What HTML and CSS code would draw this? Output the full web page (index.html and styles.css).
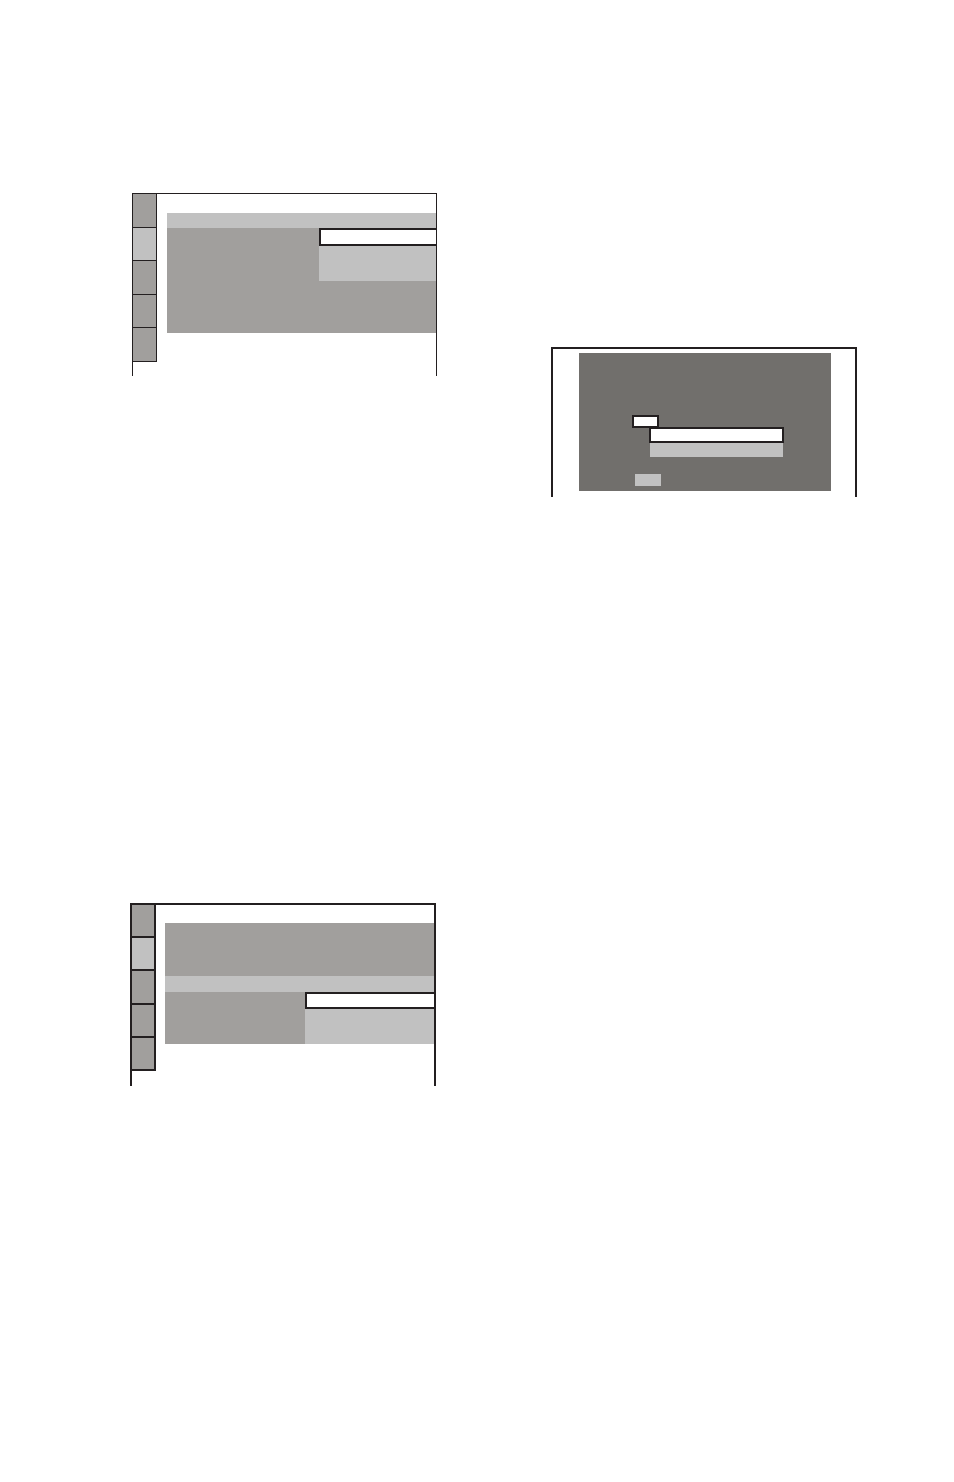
FILE: index.html
```html
<!DOCTYPE html>
<html lang="en">
<head>
  <meta charset="UTF-8" />
  <title>Setup display</title>
  <meta name="viewport" content="width=device-width, initial-scale=1.0" />
  <link rel="stylesheet" href="styles.css">
</head>
<body>
  <div class="page">
    <div class="col-left">
      <!-- setup menu, first screen -->
      <div class="screen screen-a">
        <div class="tabs">
          <div class="tab"></div>
          <div class="tab active"></div>
          <div class="tab"></div>
          <div class="tab"></div>
          <div class="tab"></div>
        </div>
        <div class="panel panel-a">
          <div class="bar-head"></div>
          <div class="menu-body">
            <div class="menu-left"></div>
            <div class="menu-right">
              <div class="option selected"></div>
              <div class="option-list"></div>
            </div>
          </div>
        </div>
      </div>

      <!-- setup menu, second screen -->
      <div class="screen screen-c">
        <div class="tabs">
          <div class="tab"></div>
          <div class="tab active"></div>
          <div class="tab"></div>
          <div class="tab"></div>
          <div class="tab"></div>
        </div>
        <div class="panel panel-c">
          <div class="info-block"></div>
          <div class="bar-sub"></div>
          <div class="menu-body short">
            <div class="menu-left"></div>
            <div class="menu-right">
              <div class="option selected"></div>
              <div class="option-list"></div>
            </div>
          </div>
        </div>
      </div>
    </div>

    <div class="col-right">
      <!-- dialog screen -->
      <div class="screen screen-b">
        <div class="dialog">
          <div class="chip"></div>
          <div class="field"></div>
          <div class="field-list"></div>
          <div class="button"></div>
        </div>
      </div>
    </div>
  </div>
</body>
</html>
```

FILE: styles.css
```css
body {
  margin: 0;
  padding: 0;
  background: #ffffff;
  font-family: 'Liberation Sans', Arial, sans-serif;
}
.page {
  display: flex;
  align-items: flex-start;
  gap: 114px;
  padding-left: 132px;
  min-height: 1482px;
  box-sizing: border-box;
}
.col-left {
  display: flex;
  flex-direction: column;
}
.col-right {
  padding-top: 347px;
}

/* screen frame: open at the bottom */
.screen {
  box-sizing: border-box;
  border: 1px solid #231f20;
  border-bottom: none;
  display: flex;
  align-items: flex-start;
  background: #fff;
}
.screen-a {
  width: 305px;
  height: 183px;
  margin-top: 193px;
}
.screen-c {
  width: 306px;
  height: 183px;
  margin-top: 527px;
  margin-left: -2px;
  border-width: 2px;
}
.screen-b {
  width: 306px;
  height: 150px;
  border-width: 2px;
}

/* tab column on the left */
.tabs {
  display: flex;
  flex-direction: column;
  width: 23px;
  height: 168px;
  border-right: 1px solid #231f20;
  flex-shrink: 0;
}
.screen-c .tabs {
  width: 22px;
  height: 166px;
  border-right-width: 2px;
}
.tab {
  flex: 1;
  background: #a19f9d;
  border-bottom: 1px solid #231f20;
}
.screen-c .tab {
  border-bottom-width: 2px;
}
.tab.active {
  background: #c1c1c1;
}

/* menu panel */
.panel {
  flex: 1;
  display: flex;
  flex-direction: column;
}
.panel-a {
  margin: 19px 0 0 10px;
}
.panel-c {
  margin: 18px 0 0 9px;
}
.bar-head {
  height: 15px;
  background: #c1c1c1;
}
.info-block {
  height: 53px;
  background: #a19f9d;
}
.bar-sub {
  height: 16px;
  background: #c1c1c1;
}
.menu-body {
  display: flex;
  height: 105px;
  background: #a19f9d;
}
.menu-body.short {
  height: 52px;
}
.menu-left {
  width: 152px;
}
.short .menu-left {
  width: 140px;
}
.menu-right {
  flex: 1;
  display: flex;
  flex-direction: column;
}
/* the frame's right edge closes the selected option */
.option.selected {
  box-sizing: border-box;
  height: 18px;
  background: #fff;
  border: 2px solid #231f20;
  border-right: none;
}
.short .option.selected {
  height: 17px;
}
.option-list {
  height: 35px;
  background: #c1c1c1;
}

/* dialog */
.dialog {
  width: 252px;
  height: 138px;
  margin: 4px 0 0 26px;
  background: #716f6c;
  display: flex;
  flex-direction: column;
  align-items: flex-start;
}
.chip {
  box-sizing: border-box;
  width: 27px;
  height: 13px;
  margin: 62px 0 0 53px;
  background: #fff;
  border: 2px solid #231f20;
}
.field {
  box-sizing: border-box;
  width: 135px;
  height: 16px;
  margin: -1px 0 0 70px;
  background: #fff;
  border: 2px solid #231f20;
}
.field-list {
  width: 133px;
  height: 14px;
  margin-left: 71px;
  background: #c1c1c1;
}
.button {
  width: 26px;
  height: 12px;
  margin: 17px 0 0 56px;
  background: #c1c1c1;
}
```
